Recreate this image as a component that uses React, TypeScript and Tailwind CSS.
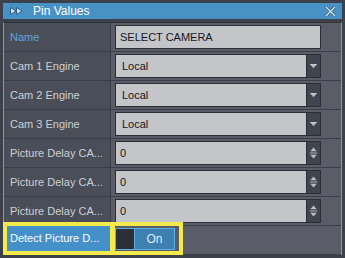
import React from 'react';

const font = { fontFamily: '"Liberation Sans", Arial, sans-serif' };

function DownArrow() {
  return (
    <svg width="14" height="22" viewBox="0 0 14 22">
      <path d="M3.5 9.5 L10.5 9.5 L7 13.5 Z" fill="#b9bbbf" />
      <path d="M3.5 9.5 L10.5 9.5" stroke="#d8d9dc" strokeWidth="1" />
    </svg>
  );
}

function SpinArrows() {
  return (
    <svg width="14" height="22" viewBox="0 0 14 22">
      <path d="M3.5 9 L10.5 9 L7 5 Z" fill="#b9bbbf" />
      <path d="M3 11 L11 11" stroke="#b9bbbf" strokeWidth="1" />
      <path d="M3.5 13 L10.5 13 L7 17 Z" fill="#b9bbbf" />
    </svg>
  );
}

function SelectBox({ value }: { value: string }) {
  return (
    <div className="flex w-[206px] h-[24px] border border-[#2b2e35]">
      <div className="flex-1 bg-[#c4c5c9] flex items-center pl-[6px] text-[11px] text-[#15171c]">{value}</div>
      <div className="w-[14px] bg-[#40444e] border-l border-[#2b2e35] flex items-center justify-center">
        <DownArrow />
      </div>
    </div>
  );
}

function SpinBox({ value }: { value: string }) {
  return (
    <div className="flex w-[206px] h-[24px] border border-[#2b2e35]">
      <div className="flex-1 bg-[#c4c5c9] flex items-center pl-[4px] text-[11px] text-[#15171c]">{value}</div>
      <div className="w-[14px] bg-[#40444e] border-l border-[#2b2e35] flex items-center justify-center">
        <SpinArrows />
      </div>
    </div>
  );
}

function Row({ label, children, accent }: { label: string; children: React.ReactNode; accent?: boolean }) {
  return (
    <div className="flex h-[29px] border-b border-[#3a3e46]">
      <div
        className={`w-[107px] shrink-0 bg-[#4a4e58] border-r border-[#3a3e46] flex items-center pl-[6px] text-[11px] whitespace-nowrap ${
          accent ? 'text-[#5ea6da]' : 'text-[#cdd0d4]'
        }`}
      >
        {label}
      </div>
      <div className="flex-1 bg-[#5a5d68] flex items-center pl-[4px]">{children}</div>
    </div>
  );
}

export default function App() {
  return (
    <div className="w-[345px] h-[258px] bg-[#3c414a] pt-[3px] px-[3px] overflow-hidden" style={font}>
      {/* title bar */}
      <div className="h-[16px] bg-[#4891c5] flex items-center">
        <svg width="14" height="8" viewBox="0 0 14 8" className="ml-[7px]">
          <path d="M0.5 0.5 L6 4 L0.5 7.5 Z" fill="#d7e6f2" stroke="#2d5f86" strokeWidth="1" />
          <path d="M6.5 0.5 L12 4 L6.5 7.5 Z" fill="#d7e6f2" stroke="#2d5f86" strokeWidth="1" />
        </svg>
        <span className="ml-[9px] text-[12px] text-white">Pin Values</span>
        <svg width="11" height="11" viewBox="0 0 11 11" className="ml-auto mr-[6px]">
          <path d="M1 1 L10 10 M10 1 L1 10" stroke="#2d5f86" strokeWidth="2.6" />
          <path d="M1 1 L10 10 M10 1 L1 10" stroke="#e4ebf1" strokeWidth="1.2" />
        </svg>
      </div>

      {/* content */}
      <div className="mt-[3px] border-t border-[#2f333a] border-l border-r border-l-[#58a6dc] border-r-[#58a6dc]">
        <Row label="Name" accent>
          <div className="w-[206px] h-[24px] border border-[#2b2e35] bg-[#c4c5c9] flex items-center pl-[4px] text-[11px] text-[#15171c]">
            SELECT CAMERA
          </div>
        </Row>
        <Row label="Cam 1 Engine">
          <SelectBox value="Local" />
        </Row>
        <Row label="Cam 2 Engine">
          <SelectBox value="Local" />
        </Row>
        <Row label="Cam 3 Engine">
          <SelectBox value="Local" />
        </Row>
        <Row label="Picture Delay CA...">
          <SpinBox value="0" />
        </Row>
        <Row label="Picture Delay CA...">
          <SpinBox value="0" />
        </Row>
        <Row label="Picture Delay CA...">
          <SpinBox value="0" />
        </Row>
        <div className="flex h-[29px] border-b border-[#3a3e46] bg-[#5a5d68]">
          <div className="-mt-[4px] -ml-[1px] h-[33px] bg-[#f5ea4c] p-[4px] flex gap-[5px]">
            <div className="w-[103px] bg-[#4490c8] flex items-center pl-[3px] text-[11px] text-white whitespace-nowrap">
              Detect Picture D...
            </div>
            <div className="w-[64px] bg-[#5a5d68] flex items-center">
              <div className="flex w-[60px] h-[22px] border border-[#5cb0e4]">
                <div className="w-[18px] bg-[#2c2f36]" />
                <div className="flex-1 bg-[#3e80b2] border-l border-[#5cb0e4] flex items-center justify-center text-[12px] text-[#dbe9f4]">
                  On
                </div>
              </div>
            </div>
          </div>
        </div>
      </div>
    </div>
  );
}
